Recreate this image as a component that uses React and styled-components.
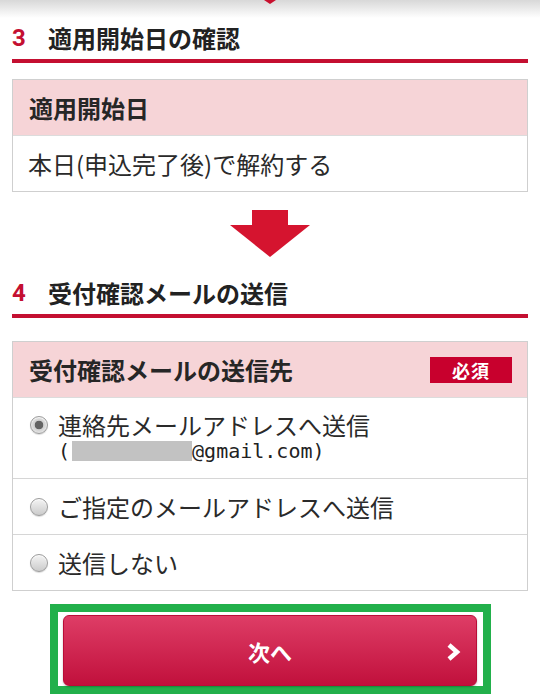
import React from "react";
import styled, { createGlobalStyle } from "styled-components";

const GlobalStyle = createGlobalStyle`
  body {
    margin: 0;
    background: #fff;
    font-family: "Noto Sans CJK JP", "Noto Sans", sans-serif;
    color: #222;
  }
`;

const Page = styled.div`
  width: 540px;
  padding: 0 12px 5px;
  box-sizing: border-box;
`;

const TopShade = styled.div`
  height: 18px;
  margin: 0 -12px;
  background: linear-gradient(#d8d8d8, #ffffff);
  display: flex;
  justify-content: center;
  align-items: flex-start;
`;

const SectionHeading = styled.h2`
  margin: ${(p) => p.$top}px 0 0;
  padding: 4px 0 5px;
  display: flex;
  align-items: center;
  border-bottom: 4px solid #c40f31;
  font-size: 24px;
  font-weight: 700;
  line-height: 32px;
  color: #222;
`;

const StepNo = styled.span`
  width: 36px;
  color: #c40f31;
  font-family: Roboto, "Liberation Sans", sans-serif;
  font-size: 24px;
`;

const Box = styled.div`
  margin-top: ${(p) => p.$top}px;
  border: 1px solid #cfcfcf;
`;

const BoxHeader = styled.div`
  height: 55px;
  padding: 0 15px 0 16px;
  display: flex;
  align-items: center;
  justify-content: space-between;
  background: #f6d4d7;
  border-bottom: 1px solid #dcdcdc;
  font-size: 24px;
  font-weight: 700;
  color: #262626;
`;

const Required = styled.span`
  width: 82px;
  height: 26px;
  display: flex;
  align-items: center;
  justify-content: center;
  background: #c8002d;
  color: #fff;
  font-size: 18px;
  font-weight: 700;
  letter-spacing: 1px;
`;

const Row = styled.div`
  min-height: ${(p) => p.$height || 55}px;
  padding: 0 15px;
  display: flex;
  align-items: center;
  gap: 10px;
  font-size: 24px;
  line-height: 26px;
  color: #2a2a2a;
  & + & {
    border-top: 1px solid #d6d6d6;
  }
`;

const OptionBody = styled.div`
  display: flex;
  flex-direction: column;
`;

const OptionLabel = styled.span`
  height: 26px;
  overflow: visible;
`;

const Radio = styled.span`
  flex: none;
  align-self: ${(p) => (p.$top ? "flex-start" : "center")};
  margin: ${(p) => (p.$top ? "18px" : "0")} 0 0 2px;
  width: 16px;
  height: 16px;
  border-radius: 50%;
  border: 1px solid #9c9c9c;
  background: ${(p) =>
    p.$checked
      ? "radial-gradient(circle, #636363 0 4px, #cfcfcf 4.6px, #e8e8e8 8.5px)"
      : "linear-gradient(#f4f4f4, #cbcbcb)"};
  box-shadow: inset 0 1px 1px rgba(255, 255, 255, 0.8), 0 1px 1px rgba(0, 0, 0, 0.15);
`;

const Mail = styled.div`
  display: flex;
  align-items: center;
  height: 26px;
  font-family: "DejaVu Sans Mono", "Liberation Mono", monospace;
  font-size: 20px;
  line-height: 26px;
  color: #222;
`;

const Masked = styled.span`
  display: inline-block;
  width: 120px;
  height: 20px;
  margin-left: 2px;
  background: #c2c2c2;
`;

const ArrowWrap = styled.div`
  margin-top: 18px;
  display: flex;
  justify-content: center;
`;

const Highlight = styled.div`
  width: 441px;
  margin: 13px 0 0 38px;
  box-sizing: border-box;
  border: 8px solid #22b04b;
  padding: 3px 6px 0 5px;
`;

const NextButton = styled.button`
  position: relative;
  width: 414px;
  height: 71px;
  display: flex;
  align-items: center;
  justify-content: center;
  border: 1px solid #b90d37;
  border-radius: 6px;
  background: linear-gradient(#de3d66, #c1103c);
  box-shadow: 0 1px 2px rgba(0, 0, 0, 0.25);
  color: #fff;
  font-family: "Noto Sans CJK JP", sans-serif;
  font-size: 22px;
  font-weight: 700;
  svg {
    position: absolute;
    right: 13px;
    top: 27px;
  }
`;

const App = () => {
  return (
    <>
      <GlobalStyle />
      <Page>
        <TopShade>
          <svg width="12" height="4" viewBox="0 0 12 4">
            <polygon points="0,0 12,0 6,4" fill="#c8102e" />
          </svg>
        </TopShade>

        <SectionHeading $top={0}>
          <StepNo>3</StepNo>適用開始日の確認
        </SectionHeading>
        <Box $top={16}>
          <BoxHeader>適用開始日</BoxHeader>
          <Row>本日(申込完了後)で解約する</Row>
        </Box>

        <ArrowWrap>
          <svg width="80" height="47" viewBox="0 0 80 47">
            <rect x="22" y="0" width="36" height="16" fill="#d5142f" />
            <polygon points="0,15 80,15 40,47" fill="#d5142f" />
          </svg>
        </ArrowWrap>

        <SectionHeading $top={16}>
          <StepNo>4</StepNo>受付確認メールの送信
        </SectionHeading>
        <Box $top={23}>
          <BoxHeader>
            受付確認メールの送信先
            <Required>必須</Required>
          </BoxHeader>
          <Row $height={80}>
            <Radio $checked $top />
            <OptionBody>
              <OptionLabel>連絡先メールアドレスへ送信</OptionLabel>
              <Mail>
                (<Masked />@gmail.com)
              </Mail>
            </OptionBody>
          </Row>
          <Row>
            <Radio />
            ご指定のメールアドレスへ送信
          </Row>
          <Row>
            <Radio />
            送信しない
          </Row>
        </Box>

        <Highlight>
          <NextButton>
            次へ
            <svg width="18" height="18" viewBox="0 0 18 18">
              <polyline
                points="4,2 12,9 4,16"
                fill="none"
                stroke="#fff"
                strokeWidth="4.5"
                strokeLinejoin="miter"
              />
            </svg>
          </NextButton>
        </Highlight>
      </Page>
    </>
  );
};

export default App;
